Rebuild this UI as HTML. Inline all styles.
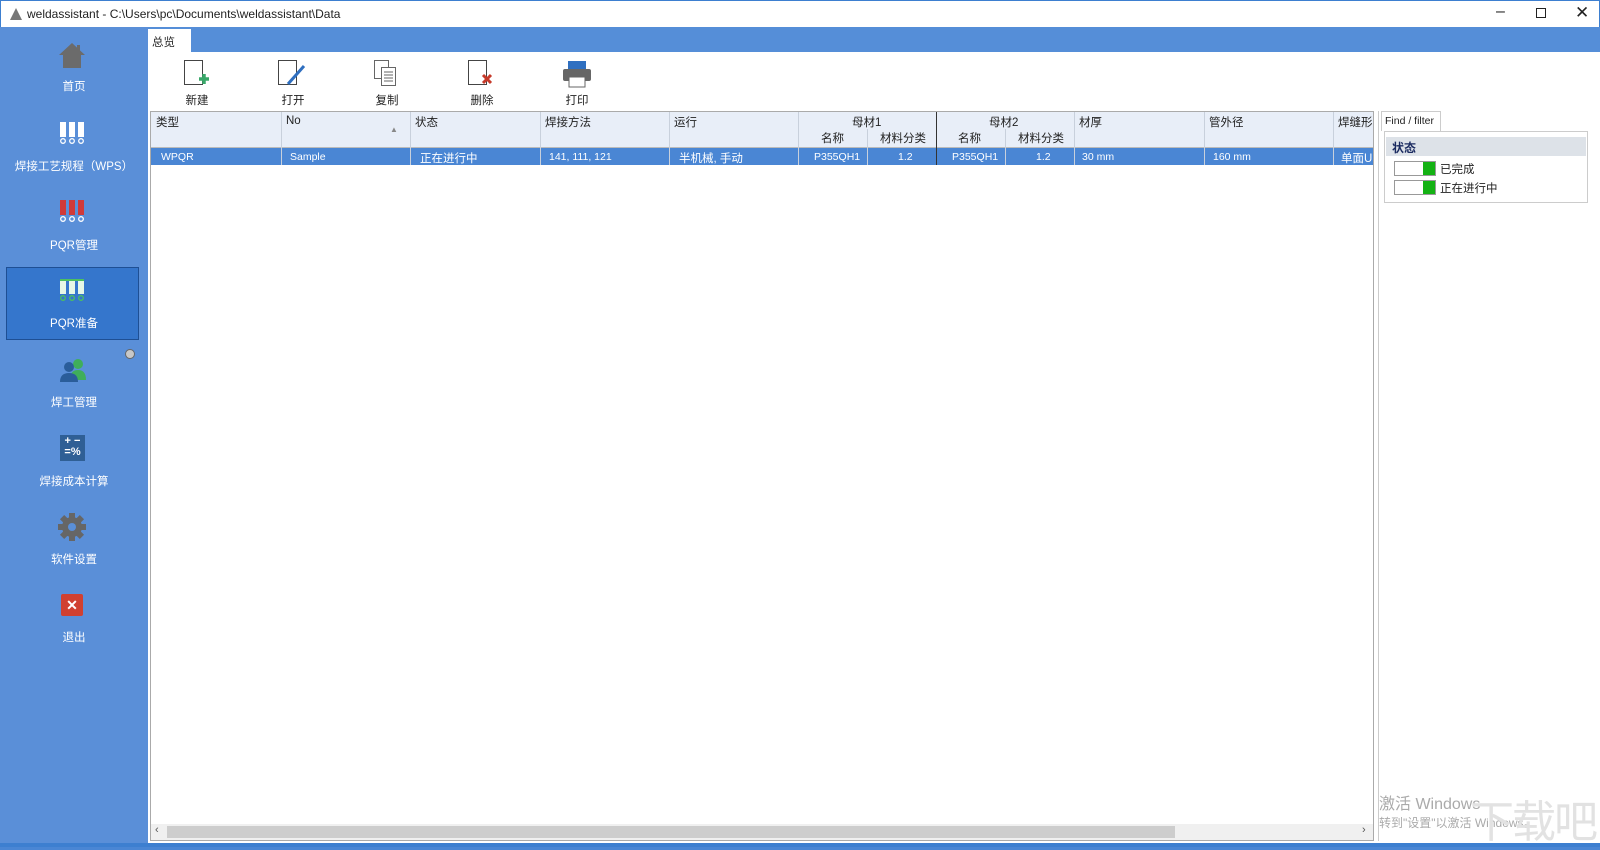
<!DOCTYPE html>
<html><head><meta charset="utf-8"><style>
*{margin:0;padding:0;box-sizing:border-box}
body{width:1600px;height:847px;overflow:hidden;background:#4a86d4;font-family:"Liberation Sans","Noto Sans CJK SC",sans-serif;font-size:12px;position:relative;color:#222}
.abs{position:absolute}
.title{left:0;top:0;width:1600px;height:27px;background:#fff;border:1px solid #3d7fd0;border-bottom:none}
.side{left:0;top:27px;width:148px;height:820px;background:#5a8fd8}
.it{position:absolute;left:0;width:148px;text-align:center;color:#fff;font-size:11.5px}
.main{left:148px;top:27px;width:1452px;height:820px;background:#558ed8}
.tb span{position:absolute;font-size:11.5px;color:#222;text-align:center;width:60px}
.hd{position:absolute;font-size:11.5px;color:#222}
.cell{position:absolute;top:151px;font-size:10.5px;color:#fff}
.cz{font-size:11.5px;top:150px}
</style></head><body>
<div class="abs title">
<svg class="abs" style="left:9px;top:7px" width="12" height="12"><polygon points="6,0 12,12 0,12" fill="#777"/></svg>
<div class="abs" style="left:26px;top:6px;font-size:12px;color:#222">weldassistant - C:\Users\pc\Documents\weldassistant\Data</div>
<div class="abs" style="left:1495px;top:2px;font-size:16px;color:#222">&#8211;</div>
<div class="abs" style="left:1535px;top:7px;width:10px;height:10px;border:1px solid #222"></div>
<div class="abs" style="left:1574px;top:2px;font-size:17px;color:#222">✕</div>
</div>
<div class="abs side">
<svg class="abs" style="left:58px;top:14px" width="28" height="28"><polygon points="14,2 27,14 23,14 23,27 5,27 5,14 1,14" fill="#6b6b6b"/><rect x="19" y="4" width="3" height="6" fill="#6b6b6b"/></svg>
<div class="it" style="top:51px">首页</div>
<svg class="abs" style="left:58px;top:93px" width="28" height="26"><g fill="#fff"><rect x="2" y="2" width="6" height="15"/><rect x="11" y="2" width="6" height="15"/><rect x="20" y="2" width="6" height="15"/></g><g fill="none" stroke="#fff" stroke-width="1.3"><circle cx="5" cy="21" r="2.3"/><circle cx="14" cy="21" r="2.3"/><circle cx="23" cy="21" r="2.3"/></g></svg>
<div class="it" style="top:131px">焊接工艺规程（WPS）</div>
<svg class="abs" style="left:58px;top:171px" width="28" height="26"><g fill="#d03a3a"><rect x="2" y="2" width="6" height="15"/><rect x="11" y="2" width="6" height="15"/><rect x="20" y="2" width="6" height="15"/></g><g fill="none" stroke="#fff" stroke-width="1.3"><circle cx="5" cy="21" r="2.3"/><circle cx="14" cy="21" r="2.3"/><circle cx="23" cy="21" r="2.3"/></g></svg>
<div class="it" style="top:210px">PQR管理</div>
<div class="abs" style="left:6px;top:240px;width:133px;height:73px;background:#3576cc;border:1px solid #1e4f94"></div>
<svg class="abs" style="left:58px;top:250px" width="28" height="26"><g fill="#e6f7e6"><rect x="2" y="2" width="6" height="15"/><rect x="11" y="2" width="6" height="15"/><rect x="20" y="2" width="6" height="15"/></g><g fill="none" stroke="#4cc060" stroke-width="1.3"><circle cx="5" cy="21" r="2.3"/><circle cx="14" cy="21" r="2.3"/><circle cx="23" cy="21" r="2.3"/></g><rect x="2" y="2" width="24" height="2" fill="#4cc060"/></svg>
<div class="it" style="top:288px">PQR准备</div>
<div class="abs" style="left:125px;top:322px;width:10px;height:10px;border-radius:50%;background:#c8c8c8;border:1px solid #666"></div>
<svg class="abs" style="left:58px;top:330px" width="30" height="26"><circle cx="20" cy="7" r="5" fill="#3fae5a"/><path d="M12 23 Q12 13 20 13 Q28 13 28 23Z" fill="#3fae5a"/><circle cx="11" cy="10" r="5" fill="#2a5d9a"/><path d="M2 25 Q2 16 11 16 Q20 16 20 25Z" fill="#2a5d9a"/></svg>
<div class="it" style="top:367px">焊工管理</div>
<div class="abs" style="left:60px;top:408px;width:25px;height:26px;background:#2f5f95;color:#fff;font-size:11px;font-weight:bold;line-height:11px;text-align:center;padding-top:1px">+ −<br>=%</div>
<div class="it" style="top:446px">焊接成本计算</div>
<svg class="abs" style="left:57px;top:485px" width="30" height="30"><g transform="translate(15,15)" fill="#666"><circle r="10"/><g id="t"><rect x="-3" y="-14" width="6" height="6"/></g><use href="#t" transform="rotate(45)"/><use href="#t" transform="rotate(90)"/><use href="#t" transform="rotate(135)"/><use href="#t" transform="rotate(180)"/><use href="#t" transform="rotate(225)"/><use href="#t" transform="rotate(270)"/><use href="#t" transform="rotate(315)"/><circle r="4" fill="#5a8fd8"/></g></svg>
<div class="it" style="top:524px">软件设置</div>
<div class="abs" style="left:61px;top:567px;width:22px;height:22px;background:#d04030;border-radius:2px;color:#fff;font-weight:bold;text-align:center;line-height:22px;font-size:14px">✕</div>
<div class="it" style="top:602px">退出</div>
</div>
<div class="abs main">
<div class="abs" style="left:0;top:2px;width:43px;height:25px;background:#fff;font-size:11.5px;padding:5px 0 0 4px">总览</div>
<div class="abs" style="left:0;top:25px;width:1452px;height:795px;background:#fff"></div>
</div>
<svg class="abs" style="left:184px;top:60px" width="26" height="28"><rect x="0.5" y="0.5" width="18" height="24" fill="#fff" stroke="#444"/><path d="M15 19h10M20 14v10" stroke="#3aa86a" stroke-width="3.5"/></svg>
<svg class="abs" style="left:278px;top:60px" width="30" height="28"><rect x="0.5" y="0.5" width="18" height="24" fill="#fff" stroke="#444"/><path d="M10 24 L26 6" stroke="#2f6fc0" stroke-width="3"/></svg>
<svg class="abs" style="left:374px;top:60px" width="26" height="28"><rect x="0.5" y="0.5" width="14" height="18" fill="#fff" stroke="#666"/><rect x="7.5" y="7.5" width="14" height="18" fill="#fff" stroke="#666"/><path d="M10 12h9M10 15h9M10 18h9M10 21h9" stroke="#666"/></svg>
<svg class="abs" style="left:468px;top:60px" width="26" height="28"><rect x="0.5" y="0.5" width="18" height="24" fill="#fff" stroke="#444"/><path d="M15 15l8 8M23 15l-8 8" stroke="#c63a2a" stroke-width="3"/></svg>
<svg class="abs" style="left:562px;top:60px" width="30" height="28"><rect x="6" y="1" width="18" height="8" fill="#2f6fc0"/><rect x="1" y="9" width="28" height="12" rx="2" fill="#666"/><rect x="7" y="17" width="16" height="10" fill="#fff" stroke="#666"/></svg>
<div class="tb">
<span style="left:167px;top:92px">新建</span><span style="left:263px;top:92px">打开</span><span style="left:357px;top:92px">复制</span><span style="left:452px;top:92px">删除</span><span style="left:547px;top:92px">打印</span>
</div>
<div class="abs" style="left:150px;top:111px;width:1224px;height:730px;border:1px solid #aaa;background:#fff"></div>
<div class="abs" style="left:151px;top:112px;width:1222px;height:36px;background:#e8eef8;border-bottom:1px solid #bbb"></div>
<div class="abs" style="left:151px;top:148px;width:1222px;height:17px;background:#4a86d4"></div>
<div class="abs" style="left:281px;top:112px;width:1px;height:53px;background:#c8d0dc"></div>
<div class="abs" style="left:410px;top:112px;width:1px;height:53px;background:#c8d0dc"></div>
<div class="abs" style="left:540px;top:112px;width:1px;height:53px;background:#c8d0dc"></div>
<div class="abs" style="left:669px;top:112px;width:1px;height:53px;background:#c8d0dc"></div>
<div class="abs" style="left:798px;top:112px;width:1px;height:53px;background:#c8d0dc"></div>
<div class="abs" style="left:867px;top:129px;width:1px;height:36px;background:#c8d0dc"></div>
<div class="abs" style="left:936px;top:112px;width:1px;height:53px;background:#333"></div>
<div class="abs" style="left:1005px;top:129px;width:1px;height:36px;background:#c8d0dc"></div>
<div class="abs" style="left:1074px;top:112px;width:1px;height:53px;background:#c8d0dc"></div>
<div class="abs" style="left:1204px;top:112px;width:1px;height:53px;background:#c8d0dc"></div>
<div class="abs" style="left:1333px;top:112px;width:1px;height:53px;background:#c8d0dc"></div>
<div class="hd" style="left:156px;top:114px">类型</div><div class="hd" style="left:286px;top:115px">No</div>
<div class="hd" style="left:390px;top:125px;font-size:8px;color:#888">▲</div>
<div class="hd" style="left:415px;top:114px">状态</div><div class="hd" style="left:545px;top:114px">焊接方法</div>
<div class="hd" style="left:674px;top:114px">运行</div>
<div class="hd" style="left:852px;top:114px">母材1</div><div class="hd" style="left:989px;top:114px">母材2</div>
<div class="hd" style="left:821px;top:130px">名称</div><div class="hd" style="left:880px;top:130px">材料分类</div>
<div class="hd" style="left:958px;top:130px">名称</div><div class="hd" style="left:1018px;top:130px">材料分类</div>
<div class="hd" style="left:1079px;top:114px">材厚</div><div class="hd" style="left:1209px;top:114px">管外径</div><div class="hd" style="left:1338px;top:114px">焊缝形</div>
<div class="cell" style="left:161px">WPQR</div><div class="cell" style="left:290px">Sample</div>
<div class="cell cz" style="left:420px">正在进行中</div><div class="cell" style="left:549px">141, 111, 121</div>
<div class="cell cz" style="left:679px">半机械, 手动</div>
<div class="cell" style="left:814px">P355QH1</div><div class="cell" style="left:898px">1.2</div>
<div class="cell" style="left:952px">P355QH1</div><div class="cell" style="left:1036px">1.2</div>
<div class="cell" style="left:1082px">30 mm</div><div class="cell" style="left:1213px">160 mm</div><div class="cell cz" style="left:1341px">单面U</div>
<div class="abs" style="left:151px;top:824px;width:1222px;height:16px;background:#f0f0f0"></div>
<div class="abs" style="left:167px;top:826px;width:1008px;height:12px;background:#cdcdcd"></div>
<div class="abs" style="left:155px;top:824px;font-size:11px;color:#555">‹</div><div class="abs" style="left:1362px;top:824px;font-size:11px;color:#555">›</div>
<div class="abs" style="left:1378px;top:111px;width:1px;height:730px;background:#ccc"></div>
<div class="abs" style="left:1381px;top:111px;width:60px;height:20px;background:#fff;border:1px solid #ccc;border-bottom:none;font-size:10.5px;padding:3px 0 0 3px">Find / filter</div>
<div class="abs" style="left:1384px;top:131px;width:204px;height:72px;border:1px solid #ccc;background:#fff"></div>
<div class="abs" style="left:1386px;top:137px;width:200px;height:19px;background:#dde2e8;font-weight:bold;color:#1a2a60;padding:2px 0 0 6px">状态</div>
<div class="abs" style="left:1394px;top:161px;width:42px;height:15px;border:1px solid #999;background:#fff"></div><div class="abs" style="left:1423px;top:162px;width:12px;height:13px;background:#14b214"></div>
<div class="abs" style="left:1440px;top:161px;font-size:11.5px">已完成</div>
<div class="abs" style="left:1394px;top:180px;width:42px;height:15px;border:1px solid #999;background:#fff"></div><div class="abs" style="left:1423px;top:181px;width:12px;height:13px;background:#14b214"></div>
<div class="abs" style="left:1440px;top:180px;font-size:11.5px">正在进行中</div>
<div class="abs" style="left:1379px;top:790px;font-size:16px;color:#aaa">激活 Windows</div>
<div class="abs" style="left:1379px;top:814px;font-size:12px;color:#aaa">转到"设置"以激活 Windows。</div>
<div class="abs" style="left:1470px;top:786px;font-size:44px;color:#e2e2e2;letter-spacing:-2px">下载吧</div>
<div class="abs" style="left:0;top:843px;width:1600px;height:4px;background:#3d7fd0"></div>
</body></html>
